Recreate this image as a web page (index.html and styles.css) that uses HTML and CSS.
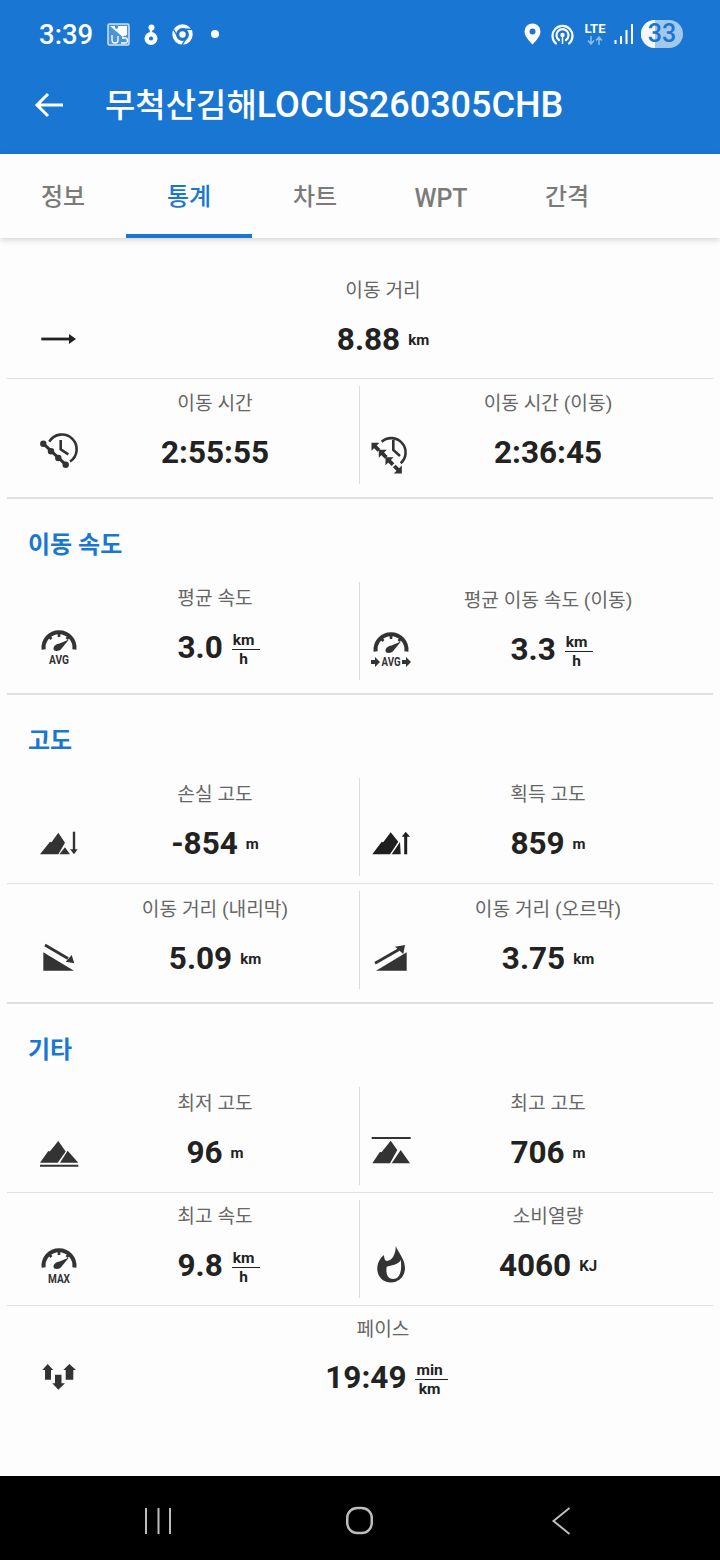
FILE: index.html
```html
<!DOCTYPE html>
<html lang="ko">
<head>
<meta charset="utf-8">
<title>무척산김해LOCUS260305CHB</title>
<link rel="stylesheet" href="styles.css">
</head>
<body>
<svg class="defs" width="0" height="0">
  <defs>
    <g id="gauge">
      <path d="M3.600 21.500A15.500 15.500 0 1 1 34.400 21.500" fill="none" stroke="currentColor" stroke-width="4"/>
      <path d="M19 3v6M8 7.500l3.500 3.500M30 7.500l-3.500 3.500" fill="none" stroke="currentColor" stroke-width="2.600"/>
      <path d="M13.500 21C13.500 17.500 16.500 16 19.500 15.500L29 11.500 22 20C20.500 23.500 13.500 24 13.500 21Z" fill="currentColor"/>
    </g>
    <g id="mini-arrow">
      <path d="M-4.500-4.500H3.500L-4.500 3.500Z" fill="#333"/>
      <path d="M-1.500-1.500 3 3" stroke="#333" stroke-width="3.800"/>
    </g>
  </defs>
</svg>
<div class="app">
  <header class="appbar">
    <div class="status">
      <div class="status-left">
        <span class="clock">3:39</span>
        <svg class="s-puzzle" width="23" height="23" viewBox="0 0 23 23"><rect x="1" y="1" width="21" height="21" rx="1.500" fill="#4a94dc" stroke="#cfe2f6" stroke-width="1.500"/><path d="M3 3h5v2a2 2 0 0 0 3 0V3h9v9h-3a2 2 0 0 0 0 3" fill="#fff"/><path d="M5 12v5a3 3 0 0 0 6 0v-4M14 12h5M14 20h4a2.500 2.500 0 0 0 0-5h-3" fill="none" stroke="#fff" stroke-width="1.300"/></svg>
        <svg class="s-app" width="14" height="21" viewBox="0 0 14 21"><circle cx="7" cy="14.500" r="4.300" fill="none" stroke="#fff" stroke-width="4.400"/><circle cx="7.500" cy="3.500" r="3" fill="#fff"/><path d="M7 5v4" stroke="#fff" stroke-width="2.400"/></svg>
        <svg class="s-chrome" width="21" height="21" viewBox="0 0 21 21"><circle cx="10.500" cy="10.500" r="8.300" fill="none" stroke="#fff" stroke-width="3.800"/><circle cx="10.500" cy="10.500" r="3.200" fill="#fff"/><path d="M10.500 5.300h9.500M6 13 1.500 5.500M15 13l-5 8" stroke="#1976d2" stroke-width="1.400"/></svg>
        <span class="s-dot"></span>
      </div>
      <div class="status-right">
        <svg width="17" height="22" viewBox="0 0 17 22"><path fill-rule="evenodd" d="M8.500 0.500a8 8 0 0 1 8 8c0 5-5 9.500-8 13-3-3.500-8-8-8-13a8 8 0 0 1 8-8zm0 5a3 3 0 1 0 0 6 3 3 0 0 0 0-6z" fill="#fff"/></svg>
        <svg class="s-hotspot" width="23" height="22" viewBox="0 0 23 22"><g fill="none" stroke="#fff" stroke-width="2.200" stroke-linecap="round"><path d="M5 20.500A10 10 0 1 1 18 20.500"/><path d="M8 17A6 6 0 1 1 15 17"/></g><circle cx="11.500" cy="12" r="2.200" fill="#fff"/><path d="M11.500 13v8" stroke="#fff" stroke-width="1.500"/></svg>
        <div class="lte"><span class="lte-text">LTE</span><svg width="16" height="9" viewBox="0 0 16 9"><path d="M4 0v7M1 4.500 4 8l3-3.500M12 9V2M9 4.500 12 1l3 3.500" fill="none" stroke="#8fbdea" stroke-width="1.500"/></svg></div>
        <svg width="19" height="20" viewBox="0 0 19 20"><path d="M1.500 20v-4M7 20v-8M12.500 20V6M18 20V0" stroke="#fff" stroke-width="2"/></svg>
        <div class="battery"><span class="battery-fill"></span><span class="battery-text">33</span></div>
      </div>
    </div>
    <div class="toolbar">
      <svg class="back" width="30" height="26" viewBox="0 0 30 26"><path d="M29 13H3M14 2 3 13l11 11" fill="none" stroke="#fff" stroke-width="3"/></svg>
      <h1 class="title">무척산김해<span class="title-latin">LOCUS260305CHB</span></h1>
    </div>
  </header>

  <nav class="tabs">
    <div class="tab">정보</div>
    <div class="tab active">통계</div>
    <div class="tab">차트</div>
    <div class="tab latin">WPT</div>
    <div class="tab">간격</div>
  </nav>

  <main class="content">
    <section class="section first">
      <div class="row">
        <div class="cell full row-a">
          <svg class="icon" viewBox="0 0 38 38"><path d="M1.300 19H30" stroke="#222" stroke-width="2.800"/><path d="M29 14l7 5-7 5z" fill="#222"/></svg>
          <div class="label">이동 거리</div>
          <div class="value"><span class="num">8.88</span><span class="unit">km</span></div>
        </div>
      </div>
      <div class="row">
        <div class="cell row-a">
          <svg class="icon" viewBox="0 0 38 38"><path d="M9.300 8.700A14.700 14.700 0 1 1 30 28.500" fill="none" stroke="#333" stroke-width="2.600"/><path d="M20.700 7v9.300l7.600 5" fill="none" stroke="#333" stroke-width="2.600"/><path d="M3.300 10.700 25.700 31.700" stroke="#333" stroke-width="3"/><g fill="#333"><circle cx="3.300" cy="10.700" r="3.200"/><circle cx="11" cy="18.300" r="3.200"/><circle cx="18.300" cy="25" r="3.200"/><circle cx="25.700" cy="31.700" r="3.200"/></g></svg>
          <div class="label">이동 시간</div>
          <div class="value"><span class="num">2:55:55</span></div>
        </div>
        <div class="cell right row-a">
          <svg class="icon" viewBox="0 0 38 38"><path d="M9.700 8.700A14 14 0 1 1 28.700 30.300" fill="none" stroke="#333" stroke-width="2.600"/><path d="M21.300 7v10l6.700 6" fill="none" stroke="#333" stroke-width="2.600"/><use href="#mini-arrow" x="4" y="14.300"/><use href="#mini-arrow" x="11.300" y="21.300"/><use href="#mini-arrow" x="18" y="28.700"/><use href="#mini-arrow" transform="translate(25.300 36) rotate(180)"/></svg>
          <div class="label">이동 시간 (이동)</div>
          <div class="value"><span class="num">2:36:45</span></div>
        </div>
      </div>
    </section>

    <section class="section">
      <h2 class="section-title">이동 속도</h2>
      <div class="row">
        <div class="cell">
          <svg class="icon" viewBox="0 0 38 38"><use href="#gauge"/><text class="icon-text" x="19" y="36" text-anchor="middle" textLength="20" lengthAdjust="spacingAndGlyphs">AVG</text></svg>
          <div class="label">평균 속도</div>
          <div class="value"><span class="num">3.0</span><span class="frac"><span class="frac-top">km</span><span class="frac-bottom">h</span></span></div>
        </div>
        <div class="cell right shifted">
          <svg class="icon" viewBox="0 0 38 38"><use href="#gauge"/><text class="icon-text" x="19" y="36" text-anchor="middle" textLength="19" lengthAdjust="spacingAndGlyphs">AVG</text><path d="M-1 30h4v-3l5 5-5 5v-3h-4zM30 30h4v-3l5 5-5 5v-3h-4z" fill="#333"/></svg>
          <div class="label">평균 이동 속도 (이동)</div>
          <div class="value"><span class="num">3.3</span><span class="frac"><span class="frac-top">km</span><span class="frac-bottom">h</span></span></div>
        </div>
      </div>
    </section>

    <section class="section">
      <h2 class="section-title">고도</h2>
      <div class="row">
        <div class="cell">
          <svg class="icon" viewBox="0 0 38 38"><path d="M0 30.300 10 17.700l1.500.5L18.300 8.700 25 18.700 18.300 30.300zM19.300 30.300 25 23.300l5 7z" fill="#333"/><path d="M34 7.700V26" stroke="#333" stroke-width="2.400"/><path d="M30 25.300h7.700L34 30.300z" fill="#333"/></svg>
          <div class="label">손실 고도</div>
          <div class="value"><span class="num">-854</span><span class="unit">m</span></div>
        </div>
        <div class="cell right">
          <svg class="icon" viewBox="0 0 38 38"><path d="M.3 30.300 9.700 17.700l1.500.5L18.700 8.300l7.600 9.400L18 30.300zM19.700 30.300 28 18l.7 12.300z" fill="#1f1f1f"/><path d="M33.700 11V30.300" stroke="#1f1f1f" stroke-width="3"/><path d="M33.700 7.700 38 12.700h-8.300z" fill="#1f1f1f"/></svg>
          <div class="label">획득 고도</div>
          <div class="value"><span class="num">859</span><span class="unit">m</span></div>
        </div>
      </div>
      <div class="row">
        <div class="cell row-b">
          <svg class="icon" viewBox="0 0 38 38"><path d="M3.300 13.300V31.700H34z" fill="#333"/><path d="M5 6 28 19.500" stroke="#333" stroke-width="2.800"/><path d="M25.700 22.700 31.700 16 34.300 24.300z" fill="#333"/></svg>
          <div class="label">이동 거리 (내리막)</div>
          <div class="value"><span class="num">5.09</span><span class="unit">km</span></div>
        </div>
        <div class="cell right row-b">
          <svg class="icon" viewBox="0 0 38 38"><path d="M4 31.700 34.700 13.300V31.700z" fill="#333"/><path d="M3 24.300 27 10.500" stroke="#333" stroke-width="2.800"/><path d="M33 6 23 7.700 31.300 15z" fill="#333"/></svg>
          <div class="label">이동 거리 (오르막)</div>
          <div class="value"><span class="num">3.75</span><span class="unit">km</span></div>
        </div>
      </div>
    </section>

    <section class="section last">
      <h2 class="section-title">기타</h2>
      <div class="row">
        <div class="cell">
          <svg class="icon" viewBox="0 0 38 38"><path d="M0 29.700 8.300 18l1.500.5L18.300 8l7.400 10.500L17.700 29.700zM20 29.700 27.700 17.700 38.300 29.700z" fill="#333"/><path d="M0 32.700H38.300" stroke="#333" stroke-width="2"/></svg>
          <div class="label">최저 고도</div>
          <div class="value"><span class="num">96</span><span class="unit">m</span></div>
        </div>
        <div class="cell right">
          <svg class="icon" viewBox="0 0 38 38"><path d="M-.3 5H38.700" stroke="#333" stroke-width="2"/><path d="M.3 30.300 8 18.700l1.500.5L18.700 7.700 25.300 17 18 30.300zM19.700 30.300 28.700 17 38 30.300z" fill="#333"/></svg>
          <div class="label">최고 고도</div>
          <div class="value"><span class="num">706</span><span class="unit">m</span></div>
        </div>
      </div>
      <div class="row">
        <div class="cell">
          <svg class="icon" viewBox="0 0 38 38"><use href="#gauge"/><text class="icon-text" x="19" y="36.500" text-anchor="middle" textLength="22" lengthAdjust="spacingAndGlyphs">MAX</text></svg>
          <div class="label">최고 속도</div>
          <div class="value"><span class="num">9.8</span><span class="frac"><span class="frac-top">km</span><span class="frac-bottom">h</span></span></div>
        </div>
        <div class="cell right">
          <svg class="icon" viewBox="0 0 38 38"><path fill-rule="evenodd" d="M23.700 0C26 6 33 13 33 22 33 31 26 36.500 19 36.500 11 36.500 5.300 30.500 5.300 23 5.300 17 8 12 12 9 12 12 13 15 15 15 20 15 24 8 23.700 0ZM14.700 20.700C14 25 14 33 21.300 33 27 33 30.500 26 28.700 14 26 19 19 19.500 14.700 20.700Z" fill="#333"/></svg>
          <div class="label">소비열량</div>
          <div class="value"><span class="num">4060</span><span class="unit">KJ</span></div>
        </div>
      </div>
      <div class="row">
        <div class="cell full last-cell">
          <svg class="icon" viewBox="0 0 38 38"><path d="M7.700 5l5.600 6H11V20.700H5V11H2.300zM29.300 5 36 11h-2.700V20.700H25.700V11H23.300zM18.300 30.700 12.300 24.300H15V15.700h6.500V24.300H25z" fill="#333"/></svg>
          <div class="label">페이스</div>
          <div class="value"><span class="num">19:49</span><span class="frac"><span class="frac-top">min</span><span class="frac-bottom">km</span></span></div>
        </div>
      </div>
    </section>
  </main>

  <footer class="navbar">
    <svg width="28" height="28" viewBox="0 0 28 28"><path d="M2 1V27M14.500 1V27M26 1V27" stroke="#bdbdbd" stroke-width="2"/></svg>
    <svg width="30" height="30" viewBox="0 0 30 30"><rect x="1.250" y="2" width="24.500" height="25" rx="10" fill="none" stroke="#bdbdbd" stroke-width="2.500"/></svg>
    <svg class="nav-back" width="20" height="30" viewBox="0 0 20 30"><path d="M19.500 2 3.500 15l16 13" fill="none" stroke="#bdbdbd" stroke-width="2"/></svg>
  </footer>
</div>
</body>
</html>
```

FILE: styles.css
```css
* {
  box-sizing: border-box;
}

html,
body {
  margin: 0;
  padding: 0;
}

body {
  width: 720px;
  height: 1560px;
  overflow: hidden;
  font-family: Roboto, "Noto Sans CJK KR", sans-serif;
  background: #fdfdfd;
}

.defs {
  display: block;
}

.app {
  width: 720px;
  height: 1560px;
  display: flex;
  flex-direction: column;
}

.appbar {
  height: 154px;
  flex: none;
  background: #1976d2;
  color: #fff;
}

.status {
  height: 68px;
  display: flex;
  align-items: center;
  justify-content: space-between;
  padding: 0 37px 0 39px;
}

.status-left,
.status-right {
  display: flex;
  align-items: center;
}

.clock {
  font-size: 27.500px;
  font-weight: 500;
  width: 68px;
}

.s-app {
  margin-left: 14px;
}

.s-chrome {
  margin-left: 14px;
}

.s-dot {
  width: 8px;
  height: 8px;
  border-radius: 50%;
  background: #fff;
  margin-left: 18px;
}

.status-right svg + svg {
  margin-left: 12px;
}

.status-right .s-hotspot {
  margin-left: 10px;
}

.lte {
  width: 22px;
  margin: 0 8px 0 10px;
  display: flex;
  flex-direction: column;
  align-items: center;
}

.lte svg {
  display: block;
  margin-top: 1px;
}

.lte-text {
  font-size: 13px;
  line-height: 12px;
  font-weight: 700;
}

.status-right .lte + svg {
  margin-left: 0;
}

.battery {
  position: relative;
  width: 42px;
  height: 28px;
  margin-left: 8px;
  border-radius: 14px;
  background: #a3c8ee;
  overflow: hidden;
  text-align: center;
}

.battery-fill {
  position: absolute;
  left: 0;
  top: 0;
  width: 14px;
  height: 28px;
  background: #f4f8fd;
}

.battery-text {
  position: relative;
  font-size: 25px;
  line-height: 28px;
  font-weight: 500;
  color: #1976d2;
}

.toolbar {
  height: 74px;
  display: flex;
  align-items: center;
  padding-left: 34px;
}

.title {
  margin: 0 0 4px 41px;
  font-size: 33px;
  font-weight: 500;
  white-space: nowrap;
}

.title-latin {
  font-size: 36px;
}

.tabs {
  position: relative;
  height: 84px;
  flex: none;
  display: flex;
  background: #fdfdfd;
  box-shadow: 0 2px 6px rgba(0, 0, 0, 0.16);
}

.tab {
  width: 126px;
  height: 84px;
  padding-bottom: 4px;
  display: flex;
  align-items: center;
  justify-content: center;
  font-size: 24px;
  font-weight: 500;
  color: #7b7b7b;
}

.tab.active {
  color: #1976d2;
  border-bottom: 4px solid #1976d2;
  padding-bottom: 0;
}

.tab.latin {
  padding: 4px 0 0;
  font-size: 25px;
}

.content {
  flex: 1;
  min-height: 0;
  padding-top: 35px;
}

.section {
  margin: 0 7px;
  border-bottom: 2px solid #e0e0e0;
}

.section.last {
  border-bottom: 0;
}

.section-title {
  height: 83px;
  margin: 0;
  padding: 30px 0 0 21px;
  font-size: 24px;
  line-height: 32px;
  font-weight: 700;
  color: #1976d2;
}

.row {
  display: flex;
  padding: 7px 0;
  border-bottom: 1px solid #e0e0e0;
}

.section .row:first-of-type {
  padding-top: 0;
}

.section .row:last-child {
  border-bottom: 0;
  padding-bottom: 13px;
}

.section.first .row + .row {
  padding-top: 7px;
}

.cell {
  flex: none;
  width: 352px;
  height: 98px;
  display: grid;
  grid-template-columns: 38px 1fr;
  grid-template-rows: 31px 67px;
  padding: 0 7px 0 33px;
}

.cell.right {
  width: 354px;
  padding: 0 27px 0 12px;
  border-left: 1px solid #dcdcdc;
}

.cell.full {
  width: 706px;
  padding: 0 25px 0 33px;
}

.cell.shifted {
  grid-template-rows: 35px 63px;
}

.icon {
  grid-column: 1;
  grid-row: 2;
  align-self: center;
  width: 38px;
  height: 38px;
  margin-top: 1px;
  overflow: visible;
  color: #333;
}

.icon-text {
  font-family: Roboto, sans-serif;
  font-size: 12px;
  font-weight: 700;
  fill: #333;
}

.label {
  grid-column: 2;
  grid-row: 1;
  align-self: center;
  margin-top: 2px;
  text-align: center;
  font-size: 19.200px;
  line-height: 26px;
  color: #666;
  white-space: nowrap;
}

.value {
  grid-column: 2;
  grid-row: 2;
  display: flex;
  align-items: center;
  justify-content: center;
  padding-top: 2px;
  color: #222;
}

.row-a .label {
  margin-top: 4px;
}

.row-a .value {
  padding-top: 4px;
}

.row-a .icon {
  margin-top: 3px;
}

.row-b .label {
  margin-top: 6px;
}

.row-b .value {
  padding-top: 6px;
}

.row-b .icon {
  margin-top: 5px;
}

.last-cell .value {
  padding-top: 0;
}

.num {
  font-size: 31.500px;
  font-weight: 700;
  line-height: 40px;
}

.unit {
  margin-left: 8px;
  font-size: 15px;
  font-weight: 700;
}

.frac {
  margin: 3px -7px 0 9px;
  display: flex;
  flex-direction: column;
  align-items: flex-start;
  font-size: 15.500px;
  font-weight: 700;
  line-height: 18px;
}

.frac-top {
  align-self: stretch;
  padding: 0 5px 0 1px;
  border-bottom: 1.500px solid #222;
}

.frac-bottom {
  align-self: stretch;
  padding-right: 4px;
  text-align: center;
}

.navbar {
  height: 84px;
  flex: none;
  background: #000;
  display: flex;
  align-items: center;
  padding: 6px 150px 0 144px;
  justify-content: space-between;
}

.nav-back {
  overflow: visible;
}
```
